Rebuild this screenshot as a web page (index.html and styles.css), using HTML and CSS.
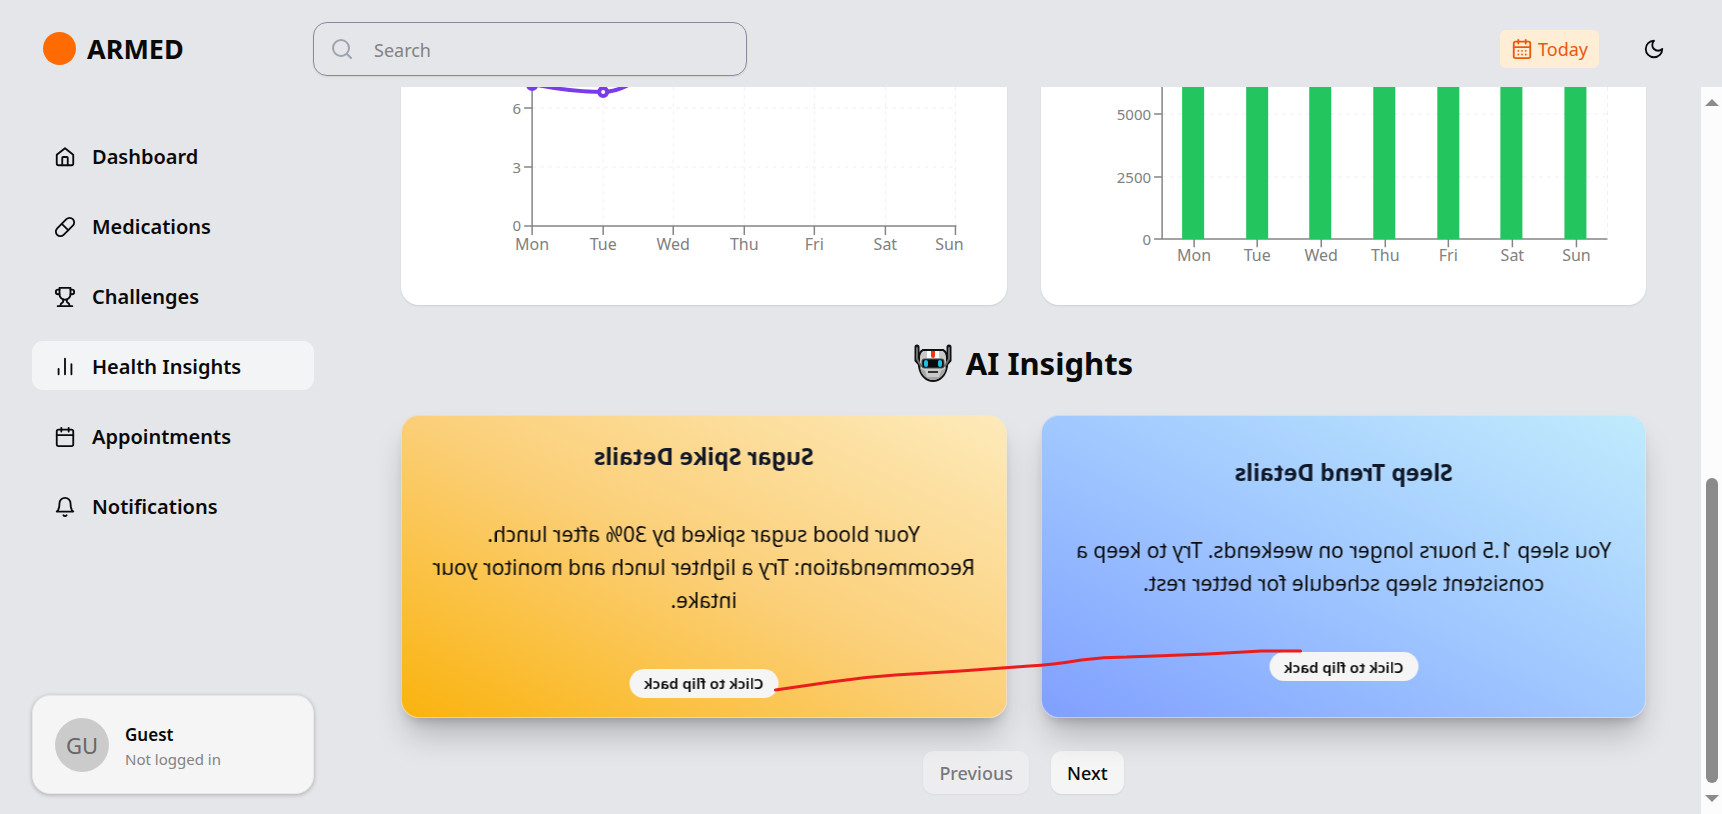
FILE: index.html
```html
<!DOCTYPE html>
<html lang="en">
<head>
<meta charset="utf-8">
<meta name="viewport" content="width=device-width, initial-scale=1">
<title>ARMED</title>
<link rel="stylesheet" href="styles.css">
</head>
<body class="app">
<header class="topbar">
  <a class="brand" href="#"><span class="brand-mark"></span>ARMED</a>
  <label class="search">
    <svg class="icon icon-search" viewBox="0 0 24 24" aria-hidden="true"><circle cx="11" cy="11" r="8"/><path d="m21 21-4.3-4.3"/></svg>
    <input type="search" placeholder="Search" aria-label="Search">
  </label>
  <button class="today" type="button">
    <svg class="icon" viewBox="0 0 24 24" aria-hidden="true"><rect x="3" y="4" width="18" height="18" rx="2"/><path d="M3 10h18M8 2v4M16 2v4"/><path class="dots" d="M8 14h.01M12 14h.01M16 14h.01M8 18h.01M12 18h.01M16 18h.01"/></svg>
    Today
  </button>
  <button class="theme" type="button" aria-label="Toggle theme">
    <svg class="icon" viewBox="0 0 24 24" aria-hidden="true"><path d="M12 3a6 6 0 0 0 9 9 9 9 0 1 1-9-9Z"/></svg>
  </button>
</header>

<div class="body">
  <aside class="sidebar">
    <nav class="nav">
      <a class="nav-item" href="#"><svg class="icon" viewBox="0 0 24 24" aria-hidden="true"><path d="M3 9.500 12 2.500l9 7V19a2 2 0 0 1-2 2H5a2 2 0 0 1-2-2Z"/><path d="M9 21v-8a1 1 0 0 1 1-1h4a1 1 0 0 1 1 1v8"/></svg>Dashboard</a>
      <a class="nav-item" href="#"><svg class="icon" viewBox="0 0 24 24" aria-hidden="true"><path d="m10.500 20.500 10-10a4.950 4.950 0 1 0-7-7l-10 10a4.950 4.950 0 1 0 7 7Z"/><path d="m8.500 8.500 7 7"/></svg>Medications</a>
      <a class="nav-item" href="#"><svg class="icon" viewBox="0 0 24 24" aria-hidden="true"><path d="M6 9H4.500a2.500 2.500 0 0 1 0-5H6M18 9h1.500a2.500 2.500 0 0 0 0-5H18M4 22h16"/><path d="M10 14.660V17c0 .550-.470.980-.970 1.210C7.850 18.750 7 20.240 7 22M14 14.660V17c0 .550.470.980.970 1.210C16.150 18.750 17 20.240 17 22"/><path d="M18 2H6v7a6 6 0 0 0 12 0Z"/></svg>Challenges</a>
      <a class="nav-item active" href="#" aria-current="page"><svg class="icon" viewBox="0 0 24 24" aria-hidden="true"><path d="M5 20v-6M12 20V3M19 20V9"/></svg>Health Insights</a>
      <a class="nav-item" href="#"><svg class="icon" viewBox="0 0 24 24" aria-hidden="true"><rect x="3" y="4" width="18" height="18" rx="2"/><path d="M3 10h18M8 2v4M16 2v4"/></svg>Appointments</a>
      <a class="nav-item" href="#"><svg class="icon" viewBox="0 0 24 24" aria-hidden="true"><path d="M6 8a6 6 0 0 1 12 0c0 7 3 9 3 9H3s3-2 3-9"/><path d="M10.300 21a1.940 1.940 0 0 0 3.400 0"/></svg>Notifications</a>
    </nav>
    <div class="user">
      <span class="avatar">GU</span>
      <div class="user-info">
        <div class="user-name">Guest</div>
        <div class="user-status">Not logged in</div>
      </div>
    </div>
  </aside>

  <main class="main">
    <section class="grid charts">
      <div class="chart-card">
        <svg class="chart" viewBox="0 0 605 218" role="img" aria-label="Line chart by day">
          <path class="gridline" d="M131 21H555M131 80H555M202 0V139M272 0V139M343 0V139M413 0V139M484 0V139M554 0V139"/>
          <path class="axis" d="M131 0V148M123 139H555M123 21H131M123 80H131M202 139V148M272 139V148M343 139V148M413 139V148M484 139V148M554 139V148"/>
          <path class="series" d="M131 -3C155 2 178 5 202 5C225 5 249 -15 272 -38"/>
          <circle class="dot" cx="131" cy="-2" r="4"/><circle class="dot" cx="202" cy="5" r="4"/>
          <g class="ticks end"><text x="120" y="27">6</text><text x="120" y="86">3</text><text x="120" y="144">0</text></g>
          <g class="ticks"><text x="131" y="163">Mon</text><text x="202" y="163">Tue</text><text x="272" y="163">Wed</text><text x="343" y="163">Thu</text><text x="413" y="163">Fri</text><text x="484" y="163">Sat</text><text x="548" y="163">Sun</text></g>
        </svg>
      </div>
      <div class="chart-card">
        <svg class="chart" viewBox="0 0 605 218" role="img" aria-label="Bar chart by day">
          <path class="gridline" d="M121 27H566M121 90H566M566 0V152"/>
          <path class="axis" d="M121 0V152M113 152H566M113 27H121M113 90H121M153 152V160M216 152V160M280 152V160M344 152V160M407 152V160M471 152V160M535 152V160"/>
          <path class="bars" d="M141 0h22v152h-22zM205 0h22v152h-22zM268 0h22v152h-22zM332 0h22v152h-22zM396 0h22v152h-22zM459 0h22v152h-22zM523 0h22v152h-22z"/>
          <g class="ticks end"><text x="110" y="33">5000</text><text x="110" y="96">2500</text><text x="110" y="158">0</text></g>
          <g class="ticks"><text x="153" y="174">Mon</text><text x="216" y="174">Tue</text><text x="280" y="174">Wed</text><text x="344" y="174">Thu</text><text x="407" y="174">Fri</text><text x="471" y="174">Sat</text><text x="535" y="174">Sun</text></g>
        </svg>
      </div>
    </section>

    <h2 class="heading">
      <svg class="robot" viewBox="0 0 38 38" aria-hidden="true">
        <path d="M3 3v13l5 6M35 3v13l-5 6" fill="none" stroke="#111" stroke-width="5" stroke-linecap="round"/>
        <path d="M9 6h20q4 2 4 8v8q-1 7-5 11-4 4-9 4t-9-4q-4-4-5-11V14q0-6 4-8Z" fill="#c9c9c9" stroke="#111" stroke-width="2"/>
        <path d="M3 4v11l4 7M35 4v11l-4 7" fill="none" stroke="#6c6c6c" stroke-width="2" stroke-linecap="round"/>
        <path d="M6 24q1 5 4 8 4 4 9 4t9-4q3-3 4-8l-5 3-2 6H13l-2-6Z" fill="#a6a6a6"/>
        <path d="M13 7h12v7H13z" fill="#fff"/><path d="M17 7h4v5q0 2-2 2t-2-2Z" fill="#f03a17"/>
        <rect x="8" y="15" width="22" height="9" rx="2" fill="#0b0b0b" stroke="#555"/>
        <rect x="10" y="16" width="4" height="7" rx="2" fill="#20bfe6"/><rect x="24" y="16" width="4" height="7" rx="2" fill="#20bfe6"/>
        <path d="M14 28h10" stroke="#333" stroke-width="2"/>
      </svg>
      AI Insights
    </h2>

    <section class="grid insights">
      <article class="flip amber">
        <div class="face">
          <h3 class="flip-title">Sugar Spike Details</h3>
          <p class="flip-text">Your blood sugar spiked by 30% after lunch. Recommendation: Try a lighter lunch and monitor your intake.</p>
          <button class="pill" type="button">Click to flip back</button>
        </div>
      </article>
      <article class="flip blue">
        <div class="face">
          <h3 class="flip-title">Sleep Trend Details</h3>
          <p class="flip-text">You sleep 1.5 hours longer on weekends. Try to keep a consistent sleep schedule for better rest.</p>
          <button class="pill" type="button">Click to flip back</button>
        </div>
      </article>
      <svg class="scribble" viewBox="0 0 1244 303" aria-hidden="true"><path d="M374 275 429 267Q462 262 494 260L559 256 628 251Q650 250 680 245 702 242 725 242L806 239 860 236H899"/></svg>
    </section>

    <div class="pager">
      <button class="page-btn" type="button" disabled>Previous</button>
      <button class="page-btn" type="button">Next</button>
    </div>
  </main>

  <div class="scrollbar" aria-hidden="true">
    <span class="arrow up"></span>
    <span class="thumb"></span>
    <span class="arrow down"></span>
  </div>
</div>
</body>
</html>
```
FILE: styles.css
```css
* { box-sizing: border-box; }

.app {
  margin: 0;
  height: 100vh;
  display: flex;
  flex-direction: column;
  overflow: hidden;
  background: #e5e6ea;
  color: #0a0a0a;
  font-family: "Noto Sans", "Open Sans", sans-serif;
  font-size: 18px;
}

button, input { font: inherit; color: inherit; }
a { color: inherit; text-decoration: none; }
h2, h3, p { margin: 0; }

.icon {
  width: 22px;
  height: 22px;
  flex: none;
  fill: none;
  stroke: currentColor;
  stroke-width: 2;
  stroke-linecap: round;
  stroke-linejoin: round;
}

/* Top bar */
.topbar {
  display: flex;
  align-items: center;
  height: 87px;
  flex: none;
  padding: 10px 47px 0 43px;
}
.brand {
  display: flex;
  align-items: center;
  gap: 11px;
  width: 270px;
  font-size: 27px;
  font-weight: 700;
}
.brand-mark {
  width: 33px;
  height: 33px;
  border-radius: 50%;
  background: #ff6b00;
}
.search {
  display: flex;
  align-items: center;
  gap: 20px;
  width: 434px;
  height: 54px;
  padding: 0 16px;
  border: 1px solid #858a9c;
  border-radius: 14px;
  box-shadow: 0 1px 2px rgba(0, 0, 0, .08);
  color: #9ca3af;
}
.icon-search { width: 24px; height: 24px; }
.search input {
  flex: 1;
  min-width: 0;
  border: 0;
  padding: 2px 0 0;
  background: none;
  outline: none;
  color: #0a0a0a;
}
.search input::placeholder { color: #828282; opacity: 1; }
.today {
  display: flex;
  align-items: center;
  gap: 5px;
  height: 38px;
  margin-left: auto;
  padding: 0 11px;
  border: 0;
  border-radius: 6px;
  background: #ffedd5;
  color: #ea580c;
}
.theme {
  display: flex;
  margin-left: 34px;
  padding: 10px;
  border: 0;
  background: none;
}

/* Page body */
.body {
  flex: 1;
  min-height: 0;
  display: flex;
}
.sidebar {
  width: 314px;
  flex: none;
  display: flex;
  flex-direction: column;
  justify-content: space-between;
  padding: 44px 0 20px 32px;
}
.nav {
  display: flex;
  flex-direction: column;
  gap: 21px;
}
.nav-item {
  display: flex;
  align-items: center;
  gap: 16px;
  height: 49px;
  padding: 2px 22px 0;
  border-radius: 11px;
  font-size: 20px;
  font-weight: 600;
}
.nav-item.active { background: #f3f4f6; }
.user {
  display: flex;
  align-items: center;
  gap: 16px;
  height: 99px;
  padding: 0 22px;
  border-radius: 18px;
  background: #f5f5f5;
  border: 1px solid #e8e8ea;
  box-shadow: 0 1px 4px rgba(0, 0, 0, .25);
}
.avatar {
  display: grid;
  place-items: center;
  width: 54px;
  height: 54px;
  border-radius: 50%;
  background: #cbcbcb;
  color: #666;
  font-size: 22px;
}
.user-info { padding-top: 4px; line-height: 24px; }
.user-name { font-size: 17px; font-weight: 600; }
.user-status { font-size: 15px; color: #828282; }

/* Main column */
.main {
  flex: 1;
  min-width: 0;
  overflow: hidden;
  padding: 0 55px 20px 87px;
}
.grid {
  display: grid;
  grid-template-columns: 1fr 1fr;
  gap: 34px;
}
.chart-card {
  border-radius: 0 0 18px 18px;
  background: #fff;
  box-shadow: 0 1px 2px rgba(0, 0, 0, .1);
}
.chart { display: block; width: 100%; overflow: hidden; border-radius: 0 0 18px 18px; }
.gridline { fill: none; stroke: #f0f0f0; stroke-width: 1; stroke-dasharray: 4 4; }
.axis { fill: none; stroke: #858585; stroke-width: 1.5; }
.series { fill: none; stroke: #7c3aed; stroke-width: 4; }
.dot { fill: #fff; stroke: #7c3aed; stroke-width: 4; }
.bars { fill: #22c55e; }
.ticks { fill: #808080; font-size: 16px; text-anchor: middle; }
.ticks.end { font-size: 15px; text-anchor: end; }

.heading {
  display: flex;
  align-items: center;
  justify-content: center;
  gap: 14px;
  height: 110px;
  padding-top: 5px;
  font-size: 31px;
  font-weight: 700;
}
.robot { width: 38px; height: 38px; }

.insights { position: relative; }
.flip {
  height: 303px;
  border: 1px solid rgba(229, 231, 235, .6);
  border-radius: 18px;
  background-origin: border-box;
  box-shadow: 0 22px 32px -6px rgba(0, 0, 0, .22), 0 8px 12px -6px rgba(0, 0, 0, .2);
}
.amber { background-image: linear-gradient(to top right, #fab30d, #fbcf78, #fdeaba); }
.blue { background-image: linear-gradient(to top right, #809fff, #a1c8ff, #c0ebfc); }
.face {
  height: 100%;
  display: flex;
  flex-direction: column;
  align-items: center;
  justify-content: center;
  padding: 0 28px;
  text-align: center;
  transform: rotateY(180deg);
}
.flip-title {
  margin-bottom: 42px;
  font-size: 23px;
  line-height: 40px;
  font-weight: 700;
  color: #111827;
}
.flip-text {
  margin-bottom: 52px;
  font-size: 21px;
  line-height: 33px;
}
.pill {
  height: 29px;
  padding: 0 15px;
  border: 0;
  border-radius: 15px;
  background: #f5f5f5;
  font-size: 15px;
  font-weight: 600;
}
.scribble {
  position: absolute;
  inset: 0;
  width: 100%;
  height: 100%;
  fill: none;
  stroke: #ea1c1c;
  stroke-width: 3;
  stroke-linecap: round;
  pointer-events: none;
}

.pager {
  display: flex;
  justify-content: center;
  gap: 22px;
  margin-top: 33px;
}
.page-btn {
  height: 43px;
  padding: 0 16px;
  border: 0;
  border-radius: 11px;
  background: #f5f5f5;
  box-shadow: 0 1px 2px rgba(0, 0, 0, .08);
  font-weight: 500;
}
.page-btn:disabled { opacity: .5; }

/* Scroll track */
.scrollbar {
  width: 21px;
  flex: none;
  display: grid;
  grid-template-rows: 19px 372fr 305fr 12px 19px;
  justify-items: center;
  background: #fcfcfc;
}
.thumb {
  grid-row: 3;
  width: 12px;
  border-radius: 6px;
  background: #8b8b8b;
}
.arrow {
  border: 7px solid transparent;
  border-top-width: 0;
  border-bottom-width: 0;
}
.up { grid-row: 1; align-self: end; border-bottom: 7px solid #8b8b8b; }
.down { grid-row: 5; align-self: start; border-top: 7px solid #8b8b8b; }
```
